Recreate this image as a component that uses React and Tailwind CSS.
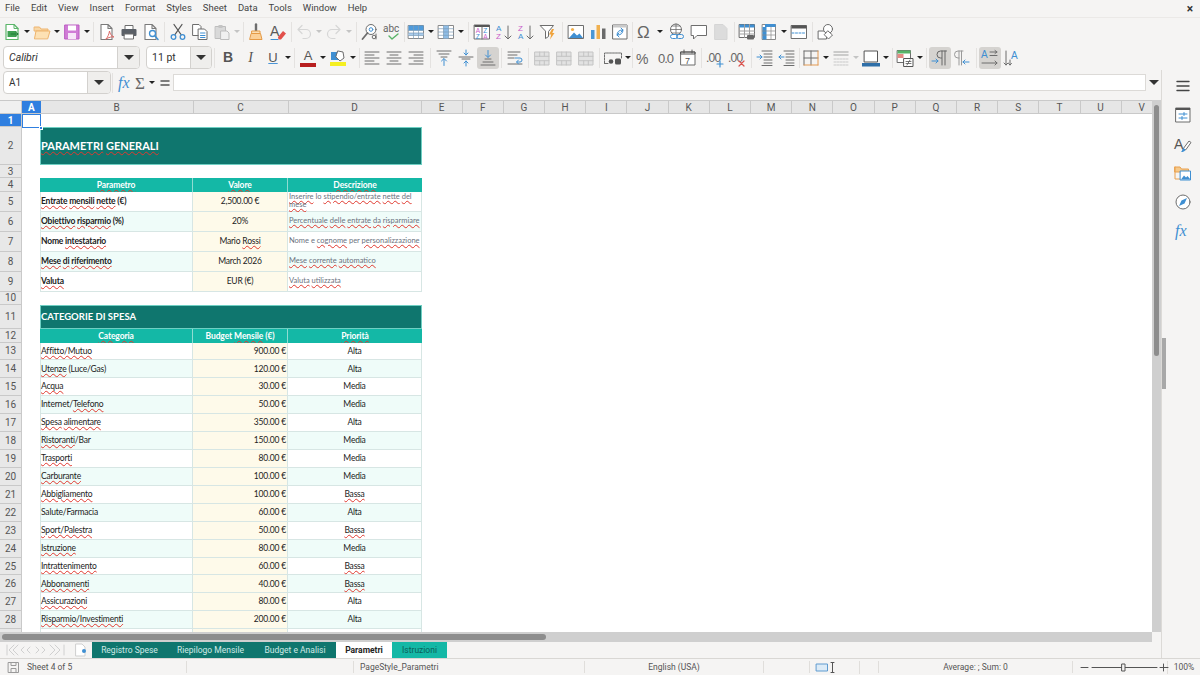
import React from "react";

const BLUE = "#3f8fd2";
const GRAY = "#6d6d6d";

// ===== icons =====
const S = ({ children, w = 18, h = 18 }) => (
  <svg className="overflow-visible" width={w} height={h} viewBox={`0 0 ${w} ${h}`} fill="none" strokeLinecap="round" strokeLinejoin="round">
    {children}
  </svg>
);
const Doc = ({ c = "#7a7a7a", x = 0 }) => (
  <path d={`M${3 + x} 1.500h7l4 4v11h-11z M${10 + x} 1.500v4h4`} stroke={c} fill="#fff" strokeWidth="1.100" />
);
const Lines = ({ ys, x1 = 2, x2 = 16, c = GRAY, w = 1 }) => (
  <path d={ys.map((y, i) => `M${Array.isArray(x1) ? x1[i] : x1} ${y}H${Array.isArray(x2) ? x2[i] : x2}`).join("")} stroke={c} strokeWidth={w} />
);
const Bricks = () => (
  <g stroke="#c4c4c4" fill="#e2e2e2">
    <rect x="2" y="3" width="14" height="13" />
    <path d="M2 7.300h14M2 11.700h14M6.700 3v4.300M11.300 3v4.300M6.700 11.700V16M11.300 11.700V16" fill="none" />
  </g>
);

const I = {
  newDoc: () => <S><path d="M3 1.500h8l4 4v11H3z" fill="#fff" stroke="#5cb56a" strokeWidth="1.200" /><path d="M11 1.500v4h4" stroke="#5cb56a" /><rect x="4.500" y="8" width="9" height="6" fill="#3fa153" /><path d="M8 11h7M13 9.500l2 1.500-2 1.500" stroke="#1f7a34" /></S>,
  open: () => <S><path d="M1.500 4h5l1.500 2h7v2H1.500z" fill="#f8d7a6" stroke="#eeb46d" /><path d="M1.500 15.500 3 8h14l-2.200 7.500z" fill="#fde1b4" stroke="#eeb46d" /></S>,
  save: () => <S><path d="M2 2h14v14H2z" fill="#d07cd6" stroke="#bb5cc2" /><rect x="5" y="2.500" width="8" height="5" fill="#fff" /><rect x="5" y="10" width="8" height="6" fill="#f7e6f8" /></S>,
  pdf: () => <S><Doc /><path d="M8 16c2-2 3-5 3.500-8 .5 3 2 5 4.500 6-2-.4-5 0-8 2z" stroke="#dc6a66" fill="none" /></S>,
  print: () => <S><path d="M5 6V2.500h8V6" stroke={GRAY} fill="#fff" /><rect x="1.500" y="6" width="15" height="7" rx="1" fill="#5a5f66" /><rect x="4.500" y="11" width="9" height="5" fill="#fff" stroke={GRAY} /></S>,
  preview: () => <S><Doc /><circle cx="10.500" cy="10.500" r="3" fill="#fff" stroke={BLUE} strokeWidth="1.300" /><path d="m13 13 3 3.500" stroke={BLUE} strokeWidth="1.500" /></S>,
  cut: () => <S><path d="m5 1.500 7 10M13 1.500l-7 10" stroke="#555" strokeWidth="1.300" /><circle cx="4.500" cy="14" r="2.300" stroke={BLUE} strokeWidth="1.300" /><circle cx="13.500" cy="14" r="2.300" stroke={BLUE} strokeWidth="1.300" /></S>,
  copy: () => <S><path d="M2 1.500h6l2 2v9H2z" fill="#fff" stroke={GRAY} /><path d="M7.500 6h6l2.500 2.500v8H7.500z" fill="#fff" stroke={GRAY} /><Lines ys={[10, 12.500, 14.500]} x1={9.500} x2={14} c={BLUE} /></S>,
  paste: () => <S><path d="M2.500 3.500h10v12h-10z" fill="#d9d9d9" stroke="#bdbdbd" /><rect x="5.500" y="2" width="4" height="3" fill="#c4c4c4" /><path d="M8 8h6l2 2v6.500H8z" fill="#f0f0f0" stroke="#bdbdbd" /></S>,
  brush: () => <S><path d="M9 1.500v6" stroke={GRAY} strokeWidth="2.400" /><path d="M5 8h8v2.500H5z" fill="#fbe0b5" stroke="#e59a45" /><path d="M4.500 10.500h9l1.500 6H3z" fill="#fbd097" stroke="#e59a45" /></S>,
  clear: () => <S><text x="1" y="13" fontSize="14" fontFamily="Liberation Sans" fill="#5a5a5a">A</text><path d="m9 14 5-6 3 2.500-5 6H9.500z" fill="#e2504b" /><path d="M2 16.500h7" stroke={BLUE} /></S>,
  undo: () => <S><path d="M3 6.500 7 2.500M3 6.500l4 4M3 6.500h8a4.500 4.500 0 0 1 0 9H8" stroke="#d6d6d6" strokeWidth="1.200" /></S>,
  redo: () => <S><path d="m15 6.500-4-4M15 6.500l-4 4M15 6.500H7a4.500 4.500 0 0 0 0 9h3" stroke="#d6d6d6" strokeWidth="1.200" /></S>,
  find: () => <S><circle cx="10" cy="6.500" r="5" fill="#fff" stroke={GRAY} /><path d="M6.500 10 1.500 16" stroke={GRAY} strokeWidth="1.800" /><circle cx="10" cy="6.500" r="1.800" stroke={BLUE} /><circle cx="13" cy="14" r="1.800" stroke={GRAY} /><path d="M15 11v5" stroke={GRAY} /></S>,
  spell: () => <S><text x="0" y="9" fontSize="10" fontFamily="Roboto" fill="#666">abc</text><path d="m6 13 3 3 6-5" stroke="#58b368" strokeWidth="1.400" /></S>,
  table: () => <S><rect x="1.500" y="2.500" width="15" height="13" fill="#fff" stroke="#8a8a8a" /><rect x="1.500" y="2.500" width="15" height="5" fill="#4f9bdb" /><rect x="1.500" y="10" width="15" height="2.500" fill="#a9cdee" /><path d="M1.500 7.500h15M1.500 10h15M1.500 12.500h15M6.500 2.500v13M11.500 2.500v13" stroke="#7d9cb8" strokeWidth=".7" /></S>,
  table2: () => <S><rect x="1.500" y="2.500" width="15" height="13" fill="#fff" stroke="#8a8a8a" /><rect x="6.500" y="2.500" width="5" height="13" fill="#8fbde6" /><path d="M1.500 5.700h15M1.500 9h15M1.500 12.300h15M6.500 2.500v13M11.500 2.500v13" stroke="#7d9cb8" strokeWidth=".7" /></S>,
  sort: () => <S><rect x="1.500" y="2" width="15" height="14" fill="#fff" stroke={GRAY} /><rect x="1.500" y="2" width="15" height="2" fill="#555" /><path d="M9 4v12" stroke={GRAY} /><text x="2.800" y="10" fontSize="6.500" fontFamily="Liberation Sans" fill="#c85cc8">A</text><text x="2.800" y="15.500" fontSize="6.500" fontFamily="Liberation Sans" fill={BLUE}>Z</text><text x="10.300" y="10" fontSize="6.500" fontFamily="Liberation Sans" fill={BLUE}>Z</text><text x="10.300" y="15.500" fontSize="6.500" fontFamily="Liberation Sans" fill="#c85cc8">A</text></S>,
  az: () => <S><text x="1" y="8" fontSize="8" fontFamily="Liberation Sans" fill={BLUE}>A</text><text x="1" y="16" fontSize="8" fontFamily="Liberation Sans" fill="#c85cc8">Z</text><path d="M13 3v12.500M10 13l3 3 3-3" stroke={GRAY} /></S>,
  za: () => <S><text x="1" y="8" fontSize="8" fontFamily="Liberation Sans" fill="#c85cc8">Z</text><text x="1" y="16" fontSize="8" fontFamily="Liberation Sans" fill={BLUE}>A</text><path d="M13 3v12.500M10 13l3 3 3-3" stroke={GRAY} /></S>,
  filter: () => <S><path d="M1.500 2.500h13l-5 6v5l-3 2v-7z" fill="#fff" stroke={GRAY} /><path d="m13 6-3 5.500h2.200l-1.200 5 4.500-6.500h-2.200l1.700-4z" fill="#f0a33c" /></S>,
  image: () => <S><rect x="1.500" y="2.500" width="15" height="13" fill="#fff" stroke={GRAY} /><circle cx="5.500" cy="6.500" r="1.600" fill="#f2b04d" /><path d="m2 15 5-5.500 3 3 2.500-2 3.500 4.500z" fill={BLUE} /></S>,
  chart: () => <S><rect x="2" y="7" width="3.500" height="9" fill="#4a97d6" /><rect x="7.500" y="2" width="3.500" height="14" fill="#f0b04f" /><rect x="13" y="5.500" width="3.500" height="10.500" fill="#6a6a6a" /></S>,
  pivot: () => <S><rect x="2" y="2" width="14" height="14" fill="#fff" stroke={GRAY} /><rect x="2" y="2" width="14" height="2.500" fill="#c9c9c9" /><path d="M6 12c0-3 2-5 5-5M10 5l2 2-2 2M12 7c0 3-2 5-5 5M8 10l-2 2 2 2" stroke={BLUE} /></S>,
  omega: () => <S><text x="1" y="15" fontSize="17" fontFamily="Liberation Sans" fill="#666">Ω</text></S>,
  link: () => <S><circle cx="8" cy="6.500" r="5.500" fill="#fff" stroke={GRAY} /><path d="M2.500 6.500h11M8 1v11M4 3h8M4 10h8" stroke={GRAY} strokeWidth=".8" /><rect x="2.500" y="11.500" width="7" height="4" rx="2" stroke={BLUE} fill="#fff" /><rect x="8.500" y="11.500" width="7" height="4" rx="2" stroke={BLUE} fill="none" /></S>,
  comment: () => <S><path d="M1.500 2.500h15v10H7l-3.500 3.500v-3.500h-2z" fill="#fff" stroke={GRAY} /></S>,
  headers: () => <S><path d="M3 1.500h8l4 4v11H3z" fill="#dcdcdc" stroke="#d5d5d5" /></S>,
  freeze: () => <S><rect x="1.500" y="1.500" width="15" height="13" fill="#fff" stroke={GRAY} /><rect x="1.500" y="1.500" width="15" height="3" fill={BLUE} /><path d="M1.500 8h15M1.500 11h15M6.500 1.500v13M11.500 1.500v13" stroke="#a0a0a0" /><rect x="9" y="12" width="7" height="4.500" rx="1" fill="#666" /></S>,
  freeze2: () => <S><rect x="2.500" y="1.500" width="13" height="15" fill="#fff" stroke="#8a8a8a" /><rect x="2.500" y="4" width="4" height="12.500" fill={BLUE} /><rect x="5" y="1" width="10.500" height="3" fill={BLUE} /><path d="M2.500 8h13M2.500 12h13M11 4v12.500" stroke="#8a8a8a" strokeWidth=".7" /></S>,
  split: () => <S><rect x="1.500" y="2.500" width="15" height="13" fill="#fff" stroke={GRAY} /><rect x="1.500" y="2.500" width="15" height="3" fill="#555" /><path d="M2 10h14" stroke={BLUE} strokeDasharray="2 1.500" /></S>,
  shapes: () => <S><path d="M1.500 8h8v8h-8z" stroke={GRAY} fill="#fff" /><circle cx="11" cy="6" r="4.500" stroke={GRAY} fill="#fff" /><path d="m11 8 4.500 4-4 4-4-4z" stroke={GRAY} fill="#fff" /></S>,
  alignL: () => <S><Lines ys={[3, 6, 9, 12, 15]} x2={[16, 11, 16, 11, 16]} /></S>,
  alignC: () => <S><Lines ys={[3, 6, 9, 12, 15]} x1={[2, 5, 2, 5, 2]} x2={[16, 13, 16, 13, 16]} /></S>,
  alignR: () => <S><Lines ys={[3, 6, 9, 12, 15]} x1={[2, 7, 2, 7, 2]} /></S>,
  vTop: () => <S><Lines ys={[2, 5, 8]} x1={[2, 4, 6]} x2={[16, 14, 12]} /><path d="M9 16.500V10M6.500 12 9 9.500l2.500 2.500" stroke={BLUE} /></S>,
  vMid: () => <S><Lines ys={[8, 10]} x1={[2, 5]} x2={[16, 13]} /><path d="M9 1v5M7 4l2 2 2-2M9 17v-5M7 14l2-2 2 2" stroke={BLUE} /></S>,
  vBot: () => <S><Lines ys={[10, 13, 16]} x1={[6, 4, 2]} x2={[12, 14, 16]} /><path d="M9 1.500V8M6.500 6 9 8.500 11.500 6" stroke={BLUE} /></S>,
  wrap: () => <S><Lines ys={[3, 6, 9, 15]} x2={[14, 11, 8, 16]} /><path d="M9 9h5a2 2 0 0 1 0 4h-3M12.500 11l-2 2 2 2" stroke={BLUE} /></S>,
  merge: () => <S><Bricks /></S>,
  currency: () => <S w={20}><path d="M1.500 14V4h17v5" stroke={GRAY} strokeDasharray="2 1" /><path d="M1.500 14.500H5" stroke={GRAY} /><circle cx="8" cy="12.500" r="2.300" fill="#555" /><rect x="12" y="9.500" width="6" height="6" rx="1.500" fill="#555" /></S>,
  percent: () => <S><text x="1" y="15" fontSize="14" fontFamily="Liberation Sans" fill="#666">%</text></S>,
  number: () => <S><text x="1" y="14" fontSize="13" fontFamily="Liberation Sans" fill="#666" letterSpacing="-1">0.0</text></S>,
  date: () => <S><rect x="2" y="3" width="14" height="13" fill="#fff" stroke={GRAY} /><path d="M2 3h14v2H2zM5 1v3M13 1v3" stroke="#555" /><text x="6" y="14.500" fontSize="9" fontFamily="Liberation Sans" fill="#555">7</text></S>,
  decAdd: () => <S><text x="0" y="13" fontSize="12" fontFamily="Liberation Sans" fill="#666" letterSpacing="-.8">.00</text><path d="M14 12v6M11 15h6" stroke={BLUE} strokeWidth="1.200" /></S>,
  decDel: () => <S><text x="0" y="13" fontSize="12" fontFamily="Liberation Sans" fill="#666" letterSpacing="-.8">.00</text><path d="m11 12 5 5M16 12l-5 5" stroke="#d9534f" strokeWidth="1.200" /></S>,
  indent: () => <S><Lines ys={[2, 5, 8, 11, 14, 16.500]} x1={[6, 8, 8, 8, 8, 6]} /><path d="M1 8h5M4 6l2 2-2 2" stroke={BLUE} /></S>,
  outdent: () => <S><Lines ys={[2, 5, 8, 11, 14, 16.500]} x1={[6, 8, 8, 8, 8, 6]} /><path d="M1 8h5M3 6 1 8l2 2" stroke={BLUE} /></S>,
  border: () => <S><path d="M2 2h14M2 2v14M9 2v14M2 9h14" stroke={GRAY} /><path d="M2 16h14M16 2v14" stroke="#e39a52" /></S>,
  lineStyle: () => <S><path d="M2 3h14M2 6h14" stroke="#bdbdbd" strokeWidth="1.500" /><path d="M2 10h14M2 13h14M2 16h14" stroke="#c9c9c9" strokeDasharray="2 1" /></S>,
  borderColor: () => <S w={20}><rect x="3.500" y="2" width="13" height="11" fill="#fff" stroke="#555" /><rect x="1" y="14" width="18" height="3.500" fill="#2f6fa8" /></S>,
  cond: () => <S><rect x="1.500" y="1.500" width="13" height="12" fill="#fff" stroke={GRAY} /><rect x="1.500" y="1.500" width="13" height="3" fill="#58b368" /><rect x="1.500" y="5" width="6" height="4" fill="#e58b84" /><rect x="8" y="9.500" width="9" height="8" fill="#fff" stroke="#555" /><path d="M10 12.500h5M10 14.500h5M14 11l-3 5" stroke="#555" strokeWidth=".8" /></S>,
  ltr: () => <S><path d="M15.500 2H9.500a3.500 3.500 0 0 0 0 7h1M11 2v14M14 2v14" stroke="#666" /><path d="M1 12h6M5 10l2 2-2 2" stroke={BLUE} /></S>,
  rtl: () => <S><path d="M10 2H5a3.500 3.500 0 0 0 0 7h1M6 2v14M8.500 2v14" stroke="#9a9a9a" /><path d="M10 13h6M12 11l-2 2 2 2" stroke={BLUE} /></S>,
  hText: () => <S><text x="0" y="9" fontSize="10" fontFamily="Liberation Sans" fill={BLUE}>A</text><path d="M9 3h7M9 6.500h7M1 14h15M14 12l2 2-2 2M14 1.500 16 3l-2 1.500" stroke={GRAY} /></S>,
  vText: () => <S><text x="8" y="10" fontSize="10" fontFamily="Liberation Sans" fill={BLUE}>A</text><path d="M3 2v14M1 14l2 2 2-2M7 11v5M5.500 14.500 7 16l1.500-1.500" stroke={GRAY} /></S>,
  fx: () => <S><text x="3" y="14" fontSize="16" fontStyle="italic" fontFamily="Liberation Serif" fill={BLUE}>fx</text></S>,
  sigma: () => <S><text x="4" y="15" fontSize="17" fontFamily="Liberation Serif" fill="#666">Σ</text></S>,
  equal: () => <S><path d="M5 7h8M5 11h8" stroke="#555" strokeWidth="1.500" /></S>,
  menu: () => <S><path d="M3 4.500h12M3 9h12M3 13.500h12" stroke="#444" strokeWidth="1.400" /></S>,
  props: () => <S><rect x="2" y="2" width="14" height="14" fill="#fff" stroke={GRAY} /><rect x="2" y="2" width="14" height="2" fill="#555" /><path d="M5 8h8M5 12h8" stroke={BLUE} /><path d="M10 6.500v3M8 10.500v3" stroke={BLUE} /></S>,
  styles: () => <S><text x="0" y="14" fontSize="14" fontFamily="Liberation Sans" fill="#555">A</text><path d="m9 14 6-8 2 1.500-5 7z" fill="#fff" stroke={GRAY} /><path d="M7 17c2 0 4-.5 4.500-2.500L9.500 13C8 14 8.500 16 7 17z" fill={BLUE} /></S>,
  gallery: () => <S><path d="M1 3h5l1.500 2h7v3H1z" fill="#f6c98a" stroke="#e8a04e" /><path d="M1 3v12h5" stroke="#e8a04e" /><rect x="6.500" y="7" width="10" height="9" fill="#fff" stroke={BLUE} /><path d="m7 15.500 3-4 2 2 1.500-1.500 3 3.500z" fill={BLUE} /></S>,
  nav: () => <S><circle cx="9" cy="9" r="7" fill="#fff" stroke={GRAY} /><path d="m13 5-2.500 5.500L5 13l2.500-5.500z" fill={BLUE} /></S>,
  sfx: () => <S><text x="1" y="14" fontSize="16" fontStyle="italic" fontFamily="Liberation Serif" fill={BLUE}>fx</text></S>,
};

// ===== toolbar bits =====
const Ic = ({ n, on, className = "" }) => {
  const C = I[n];
  return (
    <div className={`w-[22px] h-[22px] shrink-0 flex items-center justify-center rounded-[3px] ${on ? "bg-[#d5d3d0]" : ""} ${className}`}>
      <C />
    </div>
  );
};
const Ar = ({ off }) => (
  <div className="w-[8px] shrink-0 flex items-center justify-center">
    <div className={`w-0 h-0 border-x-[3px] border-x-transparent border-t-[3px] ${off ? "border-t-[#c4c4c4]" : "border-t-[#222]"}`} />
  </div>
);
const Sep = ({ w = "w-[5px]" }) => (
  <div className={`${w} shrink-0 flex justify-center`}>
    <div className="w-px h-[20px] my-auto bg-[#e4e2e0]" />
  </div>
);
const Caret = () => <div className="w-0 h-0 border-x-[5px] border-x-transparent border-t-[5px] border-t-[#333]" />;

const Combo = ({ text, w, tw, italic }) => (
  <div className={`${w} h-[23px] shrink-0 flex bg-white border border-[#d3d1ce] rounded-[4px] overflow-hidden`}>
    <div className={`${tw} flex items-center pl-[5px] text-[10.500px] text-[#333] ${italic ? "italic" : ""}`}>{text}</div>
    <div className="flex-1 flex items-center justify-center bg-[#efeeec] border-l border-[#d3d1ce]"><Caret /></div>
  </div>
);

// ===== sheet data =====
const COLS = ["E", "F", "G", "H", "I", "J", "K", "L", "M", "N", "O", "P", "Q", "R", "S", "T", "U", "V"];

// ~word~ gets the red spell check wave
const Txt = ({ t }) => (
  <span>
    {t.split(/(~[^~]+~)/).map((p, i) =>
      p.startsWith("~") ? (
        <span key={i} className="underline decoration-wavy decoration-[#e0392f] decoration-[0.7px] underline-offset-[1px]">{p.slice(1, -1)}</span>
      ) : (
        <span key={i}>{p}</span>
      )
    )}
  </span>
);

const PARAMS = [
  ["~Entrate~ ~mensili~ ~nette~ (€)", "2,500.00 €", "~Inserire~ lo ~stipendio/entrate~ ~nette~ ~del~ ~mese~", "bg-white"],
  ["~Obiettivo~ ~risparmio~ (%)", "20%", "~Percentuale~ ~delle~ ~entrate~ ~da~ ~risparmiare~", "bg-[#effcf9]"],
  ["Nome ~intestatario~", "Mario ~Rossi~", "Nome e ~cognome~ per ~personalizzazione~", "bg-white"],
  ["~Mese~ ~di~ ~riferimento~", "March 2026", "~Mese~ ~corrente~ ~automatico~", "bg-[#effcf9]"],
  ["~Valuta~", "EUR (€)", "~Valuta~ ~utilizzata~", "bg-white"],
];

const CATS = [
  ["~Affitto/Mutuo~", "900.00 €", "Alta"],
  ["~Utenze~ (Luce/Gas)", "120.00 €", "Alta"],
  ["~Acqua~", "30.00 €", "Media"],
  ["Internet/~Telefono~", "50.00 €", "Media"],
  ["~Spesa~ ~alimentare~", "350.00 €", "Alta"],
  ["~Ristoranti~/Bar", "150.00 €", "Media"],
  ["~Trasporti~", "80.00 €", "Media"],
  ["~Carburante~", "100.00 €", "Media"],
  ["~Abbigliamento~", "100.00 €", "~Bassa~"],
  ["Salute/Farmacia", "60.00 €", "Alta"],
  ["~Sport/Palestra~", "50.00 €", "~Bassa~"],
  ["~Istruzione~", "80.00 €", "Media"],
  ["~Intrattenimento~", "60.00 €", "~Bassa~"],
  ["~Abbonamenti~", "40.00 €", "~Bassa~"],
  ["~Assicurazioni~", "80.00 €", "Alta"],
  ["~Risparmio/Investimenti~", "200.00 €", "Alta"],
];

const Row = ({ n, h, active, children }) => (
  <div className={`flex shrink-0 ${h}`}>
    <div className={`w-[22px] shrink-0 flex items-center justify-center text-[10px] tracking-normal font-['Roboto',sans-serif] border-b border-r border-[#c9c9c9] ${active ? "bg-[#2f7fe0] text-white font-bold" : "bg-[#e8e8e8] text-[#555]"}`}>{n}</div>
    <div className="w-[18px] shrink-0 relative">
      {active && (
        <>
          <div className="absolute left-0 top-0 w-[19px] h-[14px] border border-[#2f7fe0]" />
          <div className="absolute left-[17px] top-[12px] w-[4px] h-[4px] bg-[#2f7fe0] border border-white" />
        </>
      )}
    </div>
    {children}
  </div>
);
const line = "border-b border-r border-[#d7e6e4]";
const Title = ({ text, size }) => (
  <div className={`w-[382px] flex items-center bg-[#0f766e] border border-[#6fcfc3] text-white font-bold ${size}`}>
    <Txt t={text} />
  </div>
);
const Head = ({ cells }) => (
  <div className="flex w-[382px] bg-[#14b8a6] text-white font-bold text-[8.500px] tracking-[-0.1px] leading-none">
    <div className="w-[153px] flex items-center justify-center border-r border-[#8fdcd2]"><Txt t={cells[0]} /></div>
    <div className="w-[95px] flex items-center justify-center border-r border-[#8fdcd2]"><Txt t={cells[1]} /></div>
    <div className="w-[134px] flex items-center justify-center"><Txt t={cells[2]} /></div>
  </div>
);

// ===== page =====
const App = () => {
  return (
    <div className="w-[1200px] h-[675px] flex flex-col overflow-hidden bg-[#f5f4f3] font-['Roboto',sans-serif] text-[#333]">
      {/* menu bar */}
      <div className="h-[17px] shrink-0 flex items-center relative text-[9.500px] text-[#444] pl-[5px] gap-[11px]">
        {["File", "Edit", "View", "Insert", "Format", "Styles", "Sheet", "Data", "Tools", "Window", "Help"].map((m) => (
          <span key={m}>{m}</span>
        ))}
        <span className="absolute right-[7px] top-0 text-[12px] font-bold text-[#333]">×</span>
      </div>

      {/* standard toolbar */}
      <div className="h-[28px] shrink-0 flex items-center pl-[1px] border-t border-[#ebe9e7]">
        <Ic n="newDoc" /><Ar /><Ic n="open" /><Ar /><Ic n="save" /><Ar /><Sep />
        <Ic n="pdf" /><Ic n="print" /><Ic n="preview" /><Sep />
        <Ic n="cut" /><Ic n="copy" /><Ic n="paste" /><Ar off /><Sep w="w-[4px]" />
        <Ic n="brush" /><Ic n="clear" /><Sep w="w-[4px]" />
        <Ic n="undo" /><Ar off /><Ic n="redo" /><Ar off /><Sep w="w-[6px]" />
        <Ic n="find" /><Ic n="spell" /><Sep w="w-[2px]" />
        <Ic n="table" /><Ar /><Ic n="table2" /><Ar /><Sep w="w-[6px]" />
        <Ic n="sort" /><Ic n="az" /><Ic n="za" /><Ic n="filter" /><Sep w="w-[6px]" />
        <Ic n="image" /><Ic n="chart" /><Ic n="pivot" /><Sep w="w-[3px]" />
        <Ic n="omega" /><Ar /><div className="w-[2px] shrink-0" /><Ic n="link" /><Ic n="comment" /><Ic n="headers" /><Sep w="w-[4px]" />
        <Ic n="freeze" /><Ic n="freeze2" /><Ar /><Ic n="split" /><Sep />
        <Ic n="shapes" />
      </div>

      {/* formatting toolbar */}
      <div className="h-[25px] shrink-0 flex items-center pl-[3px]">
        <Combo text="Calibri" w="w-[137px]" tw="w-[113px]" italic />
        <div className="w-[6px] shrink-0" />
        <Combo text="11 pt" w="w-[66px]" tw="w-[43px]" />
        <Sep w="w-[5px]" />
        <div className="w-[22px] shrink-0 text-center text-[14px] font-bold text-[#555] font-['Liberation_Sans',sans-serif]">B</div>
        <div className="w-[23px] shrink-0 text-center text-[14px] italic text-[#555] font-['Liberation_Serif',serif]">I</div>
        <div className="w-[22px] shrink-0 text-center text-[13px] text-[#555] underline decoration-[#4b94d6] font-['Liberation_Sans',sans-serif]">U</div>
        <Ar /><Sep w="w-[5px]" />
        <div className="w-[22px] h-[22px] shrink-0 flex flex-col items-center justify-center">
          <span className="text-[13px] leading-[14px] text-[#555] font-['Liberation_Sans',sans-serif]">A</span>
          <span className="w-[16px] h-[4px] bg-[#b81f1f]" />
        </div>
        <Ar />
        <div className="w-[22px] h-[22px] shrink-0 flex flex-col items-center justify-center">
          <S w={16} h={13}><path d="M1 3h8v8H1z" fill={BLUE} /><path d="m8 2 5 1 1 6-4 3-4-4z" fill="#fff" stroke={GRAY} /></S>
          <span className="w-[16px] h-[4px] bg-[#f5ef21]" />
        </div>
        <Ar /><Sep w="w-[4px]" />
        <Ic n="alignL" /><Ic n="alignC" /><Ic n="alignR" /><Sep w="w-[6px]" />
        <Ic n="vTop" /><Ic n="vMid" /><Ic n="vBot" on /><Sep />
        <Ic n="wrap" /><Sep />
        <Ic n="merge" /><Ic n="merge" /><Ic n="merge" /><Sep />
        <Ic n="currency" /><Ar /><Sep w="w-[1px]" /><Ic n="percent" /><Ic n="number" /><Ic n="date" /><Sep />
        <Ic n="decAdd" /><Ic n="decDel" /><Sep w="w-[6px]" />
        <Ic n="indent" /><Ic n="outdent" /><Sep w="w-[2px]" />
        <Ic n="border" /><Ar /><Ic n="lineStyle" /><Ar off /><Ic n="borderColor" /><Ar /><Sep w="w-[4px]" />
        <Ic n="cond" /><Ar /><Sep w="w-[5px]" />
        <Ic n="ltr" on /><Ic n="rtl" /><Sep w="w-[6px]" />
        <Ic n="hText" on /><Ic n="vText" />
      </div>

      <div className="flex-1 min-h-0 flex">
        <div className="w-[1161px] shrink-0 flex flex-col">
          {/* formula bar */}
          <div className="h-[30px] shrink-0 flex items-center pl-[3px] pb-[5px]">
            <div className="w-[108px] h-[23px] shrink-0 flex bg-white border border-[#d3d1ce] rounded-[4px] overflow-hidden">
              <div className="w-[83px] flex items-center pl-[5px] text-[10px]">A1</div>
              <div className="flex-1 flex items-center justify-center bg-[#efeeec] border-l border-[#d3d1ce]"><Caret /></div>
            </div>
            <Sep w="w-[2px]" />
            <Ic n="fx" /><div className="-ml-[6px]"><Ic n="sigma" /></div><div className="-ml-[3px]"><Ar /></div><Ic n="equal" className="-ml-[2px]" />
            <div className="w-[973px] h-[17px] ml-[-3px] shrink-0 bg-white border border-[#dcdad7]" />
            <div className="flex-1 flex justify-center"><Caret /></div>
          </div>

          {/* sheet */}
          <div className="flex-1 min-h-0 flex flex-col">
            <div className="flex h-[532px] shrink-0">
              <div className="w-[1152px] shrink-0 flex flex-col overflow-hidden bg-white font-['Lato',sans-serif] text-[8.500px] tracking-[-0.2px] text-[#222]">
                {/* column headers */}
                <div className="flex h-[14px] shrink-0 font-['Roboto',sans-serif] text-[10px] tracking-normal text-[#555] bg-[#e6e6e6] border-y border-[#c9c9c9]">
                  <div className="w-[22px] shrink-0 bg-[#f0f0f0] border-r border-[#c9c9c9]" />
                  <div className="w-[18.500px] shrink-0 flex items-center justify-center bg-[#2f7fe0] text-white font-bold">A</div>
                  <div className="w-[153px] shrink-0 flex items-center justify-center border-r border-[#c9c9c9]">B</div>
                  <div className="w-[95px] shrink-0 flex items-center justify-center border-r border-[#c9c9c9]">C</div>
                  <div className="w-[133px] shrink-0 flex items-center justify-center border-r border-[#c9c9c9]">D</div>
                  {COLS.map((c) => (
                    <div key={c} className="w-[41.200px] shrink-0 flex items-center justify-center border-r border-[#c9c9c9]">{c}</div>
                  ))}
                </div>

                <Row n="1" h="h-[13px]" active />
                <Row n="2" h="h-[38px]"><Title text="~PARAMETRI~ ~GENERALI~" size="text-[11px] tracking-normal" /></Row>
                <Row n="3" h="h-[13px]" />
                <Row n="4" h="h-[13.500px]"><Head cells={["~Parametro~", "~Valore~", "~Descrizione~"]} /></Row>
                {PARAMS.map((p, i) => (
                  <Row key={i} n={String(i + 5)} h="h-[20px]">
                    <div className={`w-[153px] flex items-center font-bold border-l border-[#d7e6e4] ${line} ${p[3]}`}><Txt t={p[0]} /></div>
                    <div className={`w-[95px] flex items-center justify-center bg-[#fefaea] ${line}`}><Txt t={p[1]} /></div>
                    <div className={`w-[134px] flex items-center pl-[1px] text-[7.500px] tracking-normal leading-[8.500px] text-[#6b7280] ${line} ${p[3]}`}><Txt t={p[2]} /></div>
                  </Row>
                ))}
                <Row n="10" h="h-[13.500px]" />
                <Row n="11" h="h-[24px]"><Title text="CATEGORIE DI SPESA" size="text-[9.500px] tracking-normal" /></Row>
                <Row n="12" h="h-[13.500px]"><Head cells={["~Categoria~", "Budget ~Mensile~ (€)", "~Priorità~"]} /></Row>
                {CATS.map((c, i) => (
                  <Row key={i} n={String(i + 13)} h="h-[17.930px]">
                    <div className={`w-[153px] flex items-center border-l border-[#d7e6e4] ${line} ${i % 2 ? "bg-[#effcf9]" : "bg-white"}`}><Txt t={c[0]} /></div>
                    <div className={`w-[95px] flex items-center justify-end pr-[1px] bg-[#fefaea] ${line}`}>{c[1]}</div>
                    <div className={`w-[134px] flex items-center justify-center ${line} ${i % 2 ? "bg-[#effcf9]" : "bg-white"}`}><Txt t={c[2]} /></div>
                  </Row>
                ))}
                <Row n="" h="h-[17.930px]">
                  <div className={`w-[153px] border-l border-[#d7e6e4] ${line}`} />
                  <div className={`w-[95px] bg-[#fefaea] ${line}`} />
                  <div className={`w-[134px] ${line}`} />
                </Row>
              </div>
              {/* vertical scrollbar */}
              <div className="w-[9px] shrink-0 bg-[#cfcfcf] pl-[1.500px] pt-[5px]">
                <div className="w-[5px] h-[251px] rounded-full bg-[#8d8d8d]" />
              </div>
            </div>

            {/* horizontal scrollbar */}
            <div className="h-[10px] w-[1152px] shrink-0 bg-[#cfcfcf] pl-[2px] pt-[2px]">
              <div className="w-[544px] h-[6px] rounded-full bg-[#8d8d8d]" />
            </div>

            {/* sheet tabs */}
            <div className="h-[16px] shrink-0 flex items-stretch text-[8.500px]">
              <div className="w-[67px] shrink-0 flex items-center pl-[6px]">
                <S w={60} h={14}><path d="M1 2v10M8 2 3 7l5 5M12 2 7 7l5 5M18 4l-3 3 3 3M24 4l-3 3 3 3M30 4l3 3-3 3M36 4l3 3-3 3M44 2l5 5-5 5M49 2l5 5-5 5M58 2v10" stroke="#d0d0d0" /></S>
              </div>
              <div className="w-[25px] shrink-0 flex items-center pl-[7px]">
                <S w={14} h={14}><path d="M2 1h6l3 3v9H2z" fill="#fff" stroke="#cfcfcf" /><circle cx="10" cy="8" r="2" fill="#3f8fd2" /></S>
              </div>
              <div className="w-[75px] shrink-0 flex items-center justify-center bg-[#0f766e] text-[#cfeae6]">Registro Spese</div>
              <div className="w-[87px] shrink-0 flex items-center justify-center bg-[#0f766e] text-[#cfeae6]">Riepilogo Mensile</div>
              <div className="w-[82px] shrink-0 flex items-center justify-center bg-[#0f766e] text-[#cfeae6]">Budget e Analisi</div>
              <div className="w-[56px] shrink-0 flex items-center justify-center bg-white font-bold text-[#222]">Parametri</div>
              <div className="w-[55px] shrink-0 flex items-center justify-center bg-[#14b8a6] text-[#0b5e58]">Istruzioni</div>
            </div>
          </div>
        </div>

        {/* sidebar */}
        <div className="flex-1 relative flex flex-col items-center border-l border-[#dcdad7] pt-[5px]">
          <div className="absolute left-0 top-[268px] w-[4px] h-[51px] bg-[#a8a8a8]" />
          <div className="ml-[3px] flex flex-col items-center gap-[7px]">
            <Ic n="menu" /><Ic n="props" /><Ic n="styles" /><Ic n="gallery" /><Ic n="nav" /><Ic n="sfx" />
          </div>
        </div>
      </div>

      {/* status bar */}
      <div className="h-[17px] shrink-0 flex items-center text-[8.500px] text-[#555] border-t border-[#d9d7d4]">
        <div className="w-[27px] shrink-0 flex justify-center">
          <S w={13} h={13}><path d="M1.500 1.500h10v10h-10z" stroke="#9a9a9a" /><path d="M4 1.500v3h5v-3M4 11.500v-4h5v4" stroke="#9a9a9a" /></S>
        </div>
        <div className="w-[160px] shrink-0 border-r border-[#e0dedb]">Sheet 4 of 5</div>
        <div className="w-[167px] shrink-0 border-r border-[#e0dedb]">&nbsp;</div>
        <div className="w-[231px] shrink-0 pl-[6px] border-r border-[#e0dedb]">PageStyle_Parametri</div>
        <div className="w-[179px] shrink-0 text-center border-r border-[#e0dedb]">English (USA)</div>
        <div className="w-[46px] shrink-0 border-r border-[#e0dedb]">&nbsp;</div>
        <div className="w-[50px] shrink-0 flex items-center pl-[5px] border-r border-[#e0dedb]">
          <S w={22} h={13}><rect x="1.500" y="3" width="11" height="7" fill="#dcebf7" stroke="#5f9bd0" /><path d="M16 1.500h3M16 11.500h3M17.500 1.500v10" stroke="#555" /></S>
        </div>
        <div className="w-[19px] shrink-0 border-r border-[#e0dedb]">&nbsp;</div>
        <div className="w-[194px] shrink-0 text-center border-r border-[#e0dedb]">Average: ; Sum: 0</div>
        <div className="w-[95px] shrink-0 flex items-center pl-[4px] border-r border-[#e0dedb]">
          <S w={88} h={13}><path d="M4 6.500h7M15 6.500h65M83 6.500h8M86.500 3v7" stroke="#555" /><rect x="45" y="3" width="3" height="7" fill="#f5f4f3" stroke="#555" /></S>
        </div>
        <div className="flex-1 text-center">100%</div>
      </div>
    </div>
  );
};

export default App;
